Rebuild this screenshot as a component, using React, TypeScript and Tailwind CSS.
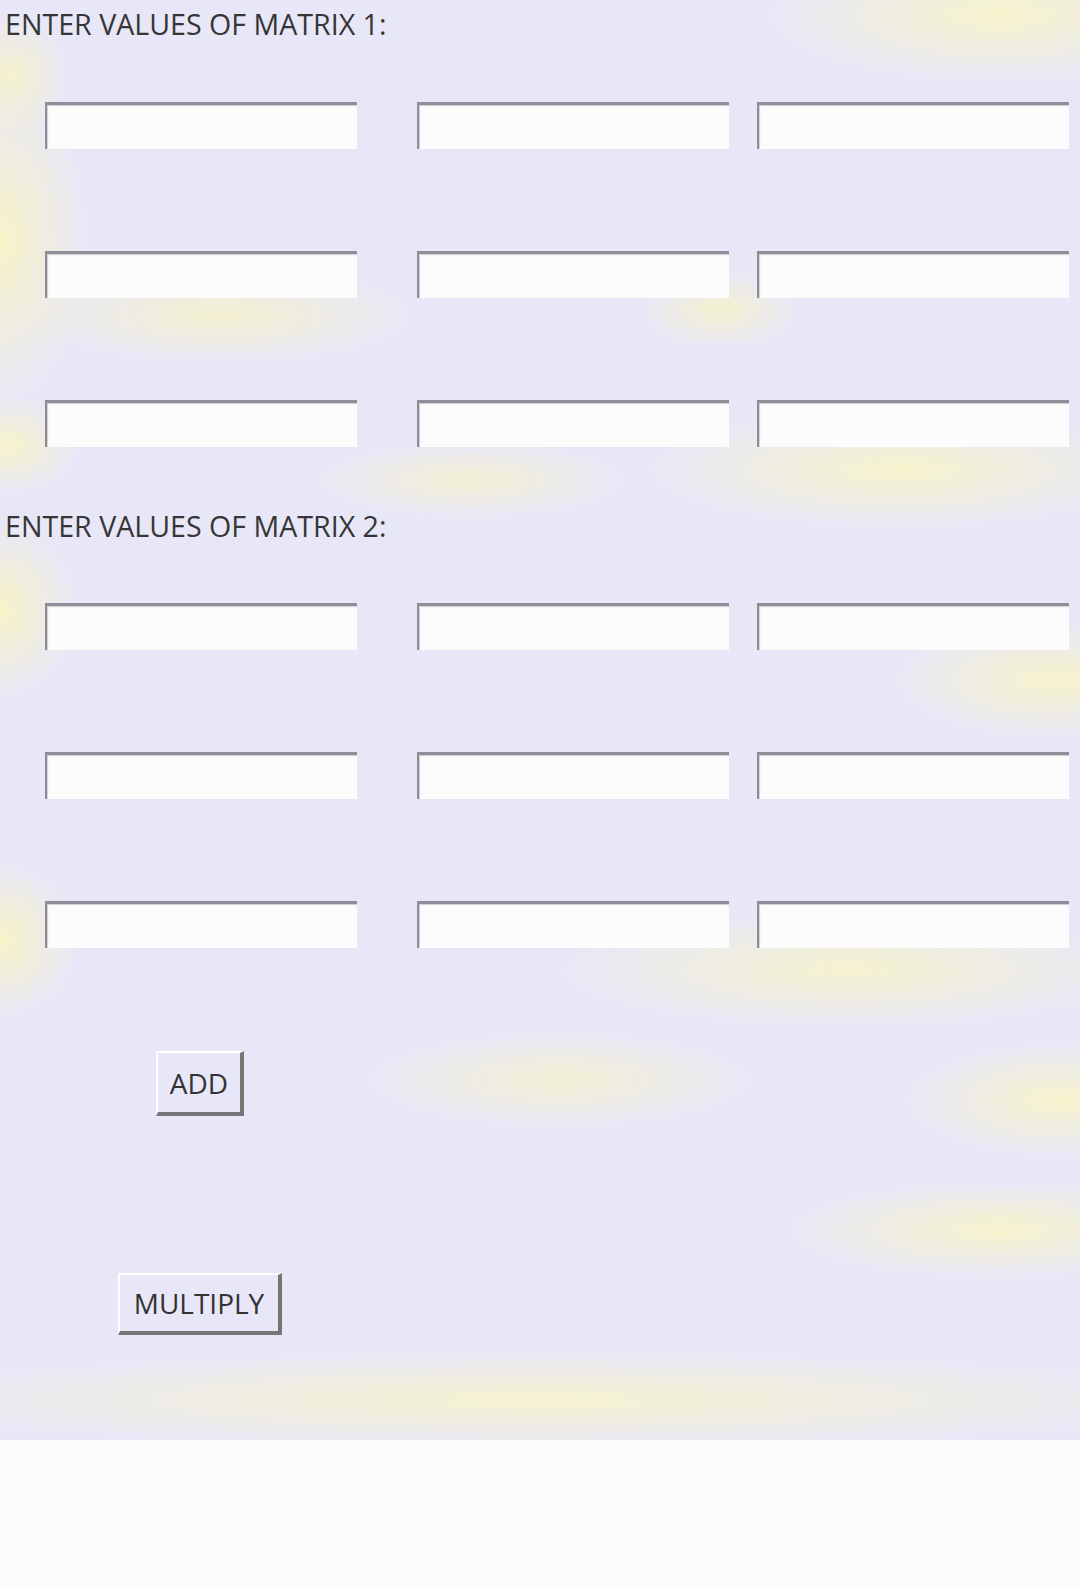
import React from "react";

const font = { fontFamily: '"Open Sans", "Noto Sans", sans-serif' };

function Box({ className = "" }: { className?: string }) {
  return (
    <input
      type="text"
      className={
        "h-[47px] w-[312px] bg-[#fcfcfd] border-t-[3px] border-l-[2px] border-r-0 border-b-0 border-[#8e8e99] outline-none shadow-[inset_1px_1px_1px_rgba(120,120,140,0.35)] " +
        className
      }
    />
  );
}

function Row() {
  return (
    <div className="flex pl-[45px]">
      <Box />
      <Box className="ml-[60px] w-[311px]" />
      <Box className="ml-[28px] w-[311px]" />
    </div>
  );
}

function Matrix() {
  return (
    <div className="flex flex-col gap-[102px]">
      <Row />
      <Row />
      <Row />
    </div>
  );
}

function Btn({ label, className = "" }: { label: string; className?: string }) {
  return (
    <button
      className={
        "font-['Open_Sans'] text-[28px] leading-none text-[#333333] border-t-2 border-l-2 border-t-white border-l-white border-r-[4px] border-b-[4px] border-r-[#767676] border-b-[#767676] bg-transparent " +
        className
      }
    >
      {label}
    </button>
  );
}

export default function App() {
  return (
    <div className="w-[1080px] min-h-[1588px] bg-[#fbfbfd] font-['Open_Sans']" style={font}>
      <div className="h-[1440px] bg-[#e8e7f8] bg-[radial-gradient(ellipse_60px_60px_at_10px_75px,#f5f2cc,transparent),radial-gradient(ellipse_90px_170px_at_0px_240px,#f7f3c8,transparent),radial-gradient(ellipse_240px_70px_at_1000px_15px,#f6f3cc,transparent),radial-gradient(ellipse_200px_50px_at_220px_315px,#f4f1d0,transparent),radial-gradient(ellipse_80px_40px_at_720px_310px,#f4f1d0,transparent),radial-gradient(ellipse_70px_50px_at_10px_445px,#f6f3cc,transparent),radial-gradient(ellipse_260px_60px_at_900px_470px,#f6f3cc,transparent),radial-gradient(ellipse_160px_40px_at_470px_480px,#f3f0d4,transparent),radial-gradient(ellipse_80px_90px_at_0px_610px,#f7f3c8,transparent),radial-gradient(ellipse_160px_60px_at_1050px_680px,#f6f3cc,transparent),radial-gradient(ellipse_80px_80px_at_0px_940px,#f7f3c8,transparent),radial-gradient(ellipse_300px_60px_at_850px_970px,#f5f2cf,transparent),radial-gradient(ellipse_160px_60px_at_1060px_1100px,#f6f3cc,transparent),radial-gradient(ellipse_200px_50px_at_560px_1080px,#f3f0d4,transparent),radial-gradient(ellipse_220px_50px_at_1000px_1230px,#f6f3cc,transparent),radial-gradient(ellipse_700px_50px_at_540px_1400px,#f5f2d0,transparent)]">
        <div className="pt-[6px] pl-[5px] text-[28.6px] leading-[36px] text-[#363636]">
          ENTER VALUES OF MATRIX 1:
        </div>
        <div className="pt-[60px]">
          <Matrix />
        </div>
        <div className="pt-[61px] pl-[5px] text-[28.6px] leading-[36px] text-[#363636]">
          ENTER VALUES OF MATRIX 2:
        </div>
        <div className="pt-[59px]">
          <Matrix />
        </div>
        <div className="flex flex-col items-center w-[400px] pt-[103px]">
          <Btn label="ADD" className="w-[88px] h-[65px]" />
          <Btn label="MULTIPLY" className="mt-[157px] w-[164px] h-[62px]" />
        </div>
      </div>
    </div>
  );
}
